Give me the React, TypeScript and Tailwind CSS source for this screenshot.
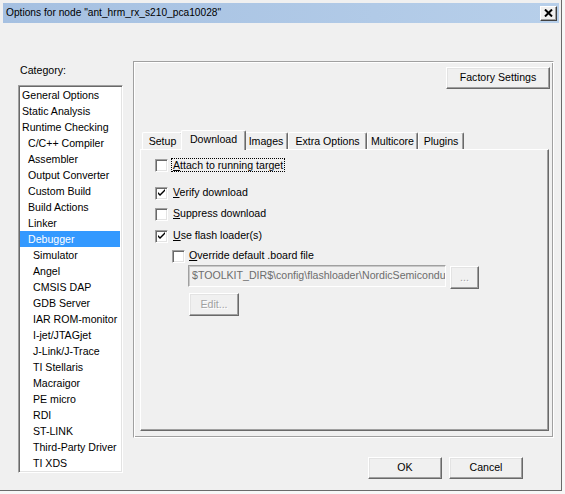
import React from "react";

type Item = { label: string; level: number; selected?: boolean };

const items: Item[] = [
  { label: "General Options", level: 0 },
  { label: "Static Analysis", level: 0 },
  { label: "Runtime Checking", level: 0 },
  { label: "C/C++ Compiler", level: 1 },
  { label: "Assembler", level: 1 },
  { label: "Output Converter", level: 1 },
  { label: "Custom Build", level: 1 },
  { label: "Build Actions", level: 1 },
  { label: "Linker", level: 1 },
  { label: "Debugger", level: 1, selected: true },
  { label: "Simulator", level: 2 },
  { label: "Angel", level: 2 },
  { label: "CMSIS DAP", level: 2 },
  { label: "GDB Server", level: 2 },
  { label: "IAR ROM-monitor", level: 2 },
  { label: "I-jet/JTAGjet", level: 2 },
  { label: "J-Link/J-Trace", level: 2 },
  { label: "TI Stellaris", level: 2 },
  { label: "Macraigor", level: 2 },
  { label: "PE micro", level: 2 },
  { label: "RDI", level: 2 },
  { label: "ST-LINK", level: 2 },
  { label: "Third-Party Driver", level: 2 },
  { label: "TI XDS", level: 2 },
];

const tabs = [
  { label: "Setup", w: "w-[41px]" },
  { label: "Download", w: "w-[65px]", selected: true },
  { label: "Images", w: "w-[44px]" },
  { label: "Extra Options", w: "w-[79px]" },
  { label: "Multicore", w: "w-[51px]" },
  { label: "Plugins", w: "w-[46px]" },
];

function Btn({
  children,
  className = "",
  disabled = false,
}: {
  children: React.ReactNode;
  className?: string;
  disabled?: boolean;
}) {
  return (
    <div
      className={`flex items-center justify-center bg-[#f0f0f0] border border-t-white border-l-white border-r-[#696969] border-b-[#696969] shadow-[inset_-1px_-1px_0_#a0a0a0,inset_1px_1px_0_#e3e3e3] ${
        disabled ? "text-[#a0a0a0] [text-shadow:1px_1px_0_#ffffff]" : "text-black"
      } ${className}`}
    >
      {children}
    </div>
  );
}

function CheckBox({ checked = false }: { checked?: boolean }) {
  return (
    <div className="w-[13px] h-[13px] shrink-0 bg-white border border-t-[#a0a0a0] border-l-[#a0a0a0] border-r-white border-b-white shadow-[inset_1px_1px_0_#696969,inset_-1px_-1px_0_#e3e3e3] flex items-center justify-center">
      {checked && (
        <svg width="11" height="11" viewBox="0 0 11 11">
          <path d="M2 4 L2 6 L4 8 L9 3 L9 1 L4 6 Z" fill="#000" />
        </svg>
      )}
    </div>
  );
}

export default function App() {
  return (
    <div className="w-[565px] h-[494px] bg-[#f7f7f7] font-['Liberation_Sans',Arial,sans-serif] text-[10.6px] text-black overflow-hidden">
      <div className="w-[562px] h-[491px] bg-[#f0f0f0] border-r border-b border-[#6a6a6a] flex flex-col">
        {/* title bar */}
        <div className="ml-[3px] mr-[2px] mt-[3px] h-[20px] bg-gradient-to-r from-[#a5c0e1] to-[#b7cfea] flex items-center justify-between pl-[3px] pr-[2px]">
          <span className="text-[10.2px] leading-[20px] text-black">
            Options for node "ant_hrm_rx_s210_pca10028"
          </span>
          <div className="w-[17px] h-[15px] bg-[#f0f0f0] border border-t-white border-l-white border-r-[#404040] border-b-[#404040] shadow-[inset_-1px_-1px_0_#a0a0a0] flex items-center justify-center">
            <svg width="9" height="8" viewBox="0 0 9 8">
              <path d="M1 0.5 L8 7.5 M8 0.5 L1 7.5" stroke="#000" strokeWidth="2" />
            </svg>
          </div>
        </div>

        {/* body */}
        <div className="flex flex-1">
          {/* left column */}
          <div className="pl-[18px] flex flex-col">
            <div className="mt-[41px] h-[13px] leading-[13px] pl-[2px]">Category:</div>
            <div className="mt-[8px] w-[105px] h-[388px] bg-white border border-t-[#a0a0a0] border-l-[#a0a0a0] border-r-white border-b-white shadow-[inset_1px_1px_0_#696969,inset_-1px_-1px_0_#e3e3e3] p-[1px] overflow-hidden">
              {items.map((it) => (
                <div
                  key={it.label}
                  className={`h-[16px] leading-[16px] whitespace-nowrap ${
                    it.level === 0 ? "pl-[2px]" : it.level === 1 ? "pl-[8px]" : "pl-[13px]"
                  } ${it.selected ? "bg-[#3399ff] text-white mr-[1px]" : ""}`}
                >
                  {it.label}
                </div>
              ))}
            </div>
          </div>

          {/* right column */}
          <div className="ml-[10px] flex flex-col">
            <div className="mt-[38px] w-[421px] h-[377px] border border-t-[#a0a0a0] border-l-[#a0a0a0] border-r-white border-b-white shadow-[inset_1px_1px_0_#ffffff,inset_-1px_-1px_0_#a0a0a0] flex flex-col">
              <div className="flex justify-end mt-[5px] mr-[3px]">
                <Btn className="w-[104px] h-[22px]">Factory Settings</Btn>
              </div>

              {/* tab strip */}
              <div className="mt-[41px] ml-[6px] h-[19px] flex items-end pl-[2px] relative z-10">
                {tabs.map((t) =>
                  t.selected ? (
                    <div
                      key={t.label}
                      className={`${t.w} -mx-[2px] h-[20px] -mb-[1px] bg-[#f0f0f0] border-l border-t border-r border-l-white border-t-white border-r-[#696969] rounded-t-[2px] shadow-[inset_-1px_0_0_#a0a0a0] flex justify-center pt-[1px] leading-[14px] relative z-20`}
                    >
                      {t.label}
                    </div>
                  ) : (
                    <div
                      key={t.label}
                      className={`${t.w} h-[17px] bg-[#f0f0f0] border-l border-t border-r border-l-white border-t-white border-r-[#696969] rounded-t-[2px] shadow-[inset_-1px_0_0_#a0a0a0] flex justify-center pt-[1px] leading-[14px]`}
                    >
                      {t.label}
                    </div>
                  )
                )}
              </div>

              {/* tab page */}
              <div className="ml-[6px] w-[409px] h-[282px] border border-t-white border-l-white border-r-[#696969] border-b-[#696969] shadow-[inset_-1px_-1px_0_#a0a0a0] flex flex-col pt-[7px]">
                <div className="h-[16px] flex items-center pl-[14px]">
                  <CheckBox />
                  <span className="ml-[3px] border border-dotted border-black px-[1px] leading-[12px]">
                    <span className="underline">A</span>ttach to running target
                  </span>
                </div>
                <div className="mt-[12px] h-[16px] flex items-center pl-[14px]">
                  <CheckBox checked />
                  <span className="ml-[5px]">
                    <span className="underline">V</span>erify download
                  </span>
                </div>
                <div className="mt-[5px] h-[16px] flex items-center pl-[14px]">
                  <CheckBox />
                  <span className="ml-[5px]">
                    <span className="underline">S</span>uppress download
                  </span>
                </div>
                <div className="mt-[6px] h-[16px] flex items-center pl-[14px]">
                  <CheckBox checked />
                  <span className="ml-[5px]">
                    <span className="underline">U</span>se flash loader(s)
                  </span>
                </div>
                <div className="mt-[4px] h-[16px] flex items-center pl-[31px]">
                  <CheckBox />
                  <span className="ml-[4px]">
                    <span className="underline">O</span>verride default .board file
                  </span>
                </div>
                <div className="mt-[1px] flex items-start pl-[47px]">
                  <div className="w-[258px] h-[22px] bg-[#f0f0f0] border border-t-[#a0a0a0] border-l-[#a0a0a0] border-r-white border-b-white shadow-[inset_1px_1px_0_#c8c8c8] flex items-center pl-[3px] overflow-hidden whitespace-nowrap text-[#6d6d6d]">
                    <span className="block w-full overflow-hidden">
                      $TOOLKIT_DIR$\config\flashloader\NordicSemiconductor\nrf52832.board
                    </span>
                  </div>
                  <Btn disabled className="ml-[4px] w-[29px] h-[23px] mt-[1px]">
                    ...
                  </Btn>
                </div>
                <div className="mt-[4px] pl-[48px]">
                  <Btn disabled className="w-[50px] h-[23px]">
                    Edit...
                  </Btn>
                </div>
              </div>
            </div>

            <div className="mt-[19px] flex justify-end gap-[7px] pr-[31px]">
              <Btn className="w-[74px] h-[22px]">OK</Btn>
              <Btn className="w-[74px] h-[22px]">Cancel</Btn>
            </div>
          </div>
        </div>
      </div>
    </div>
  );
}
